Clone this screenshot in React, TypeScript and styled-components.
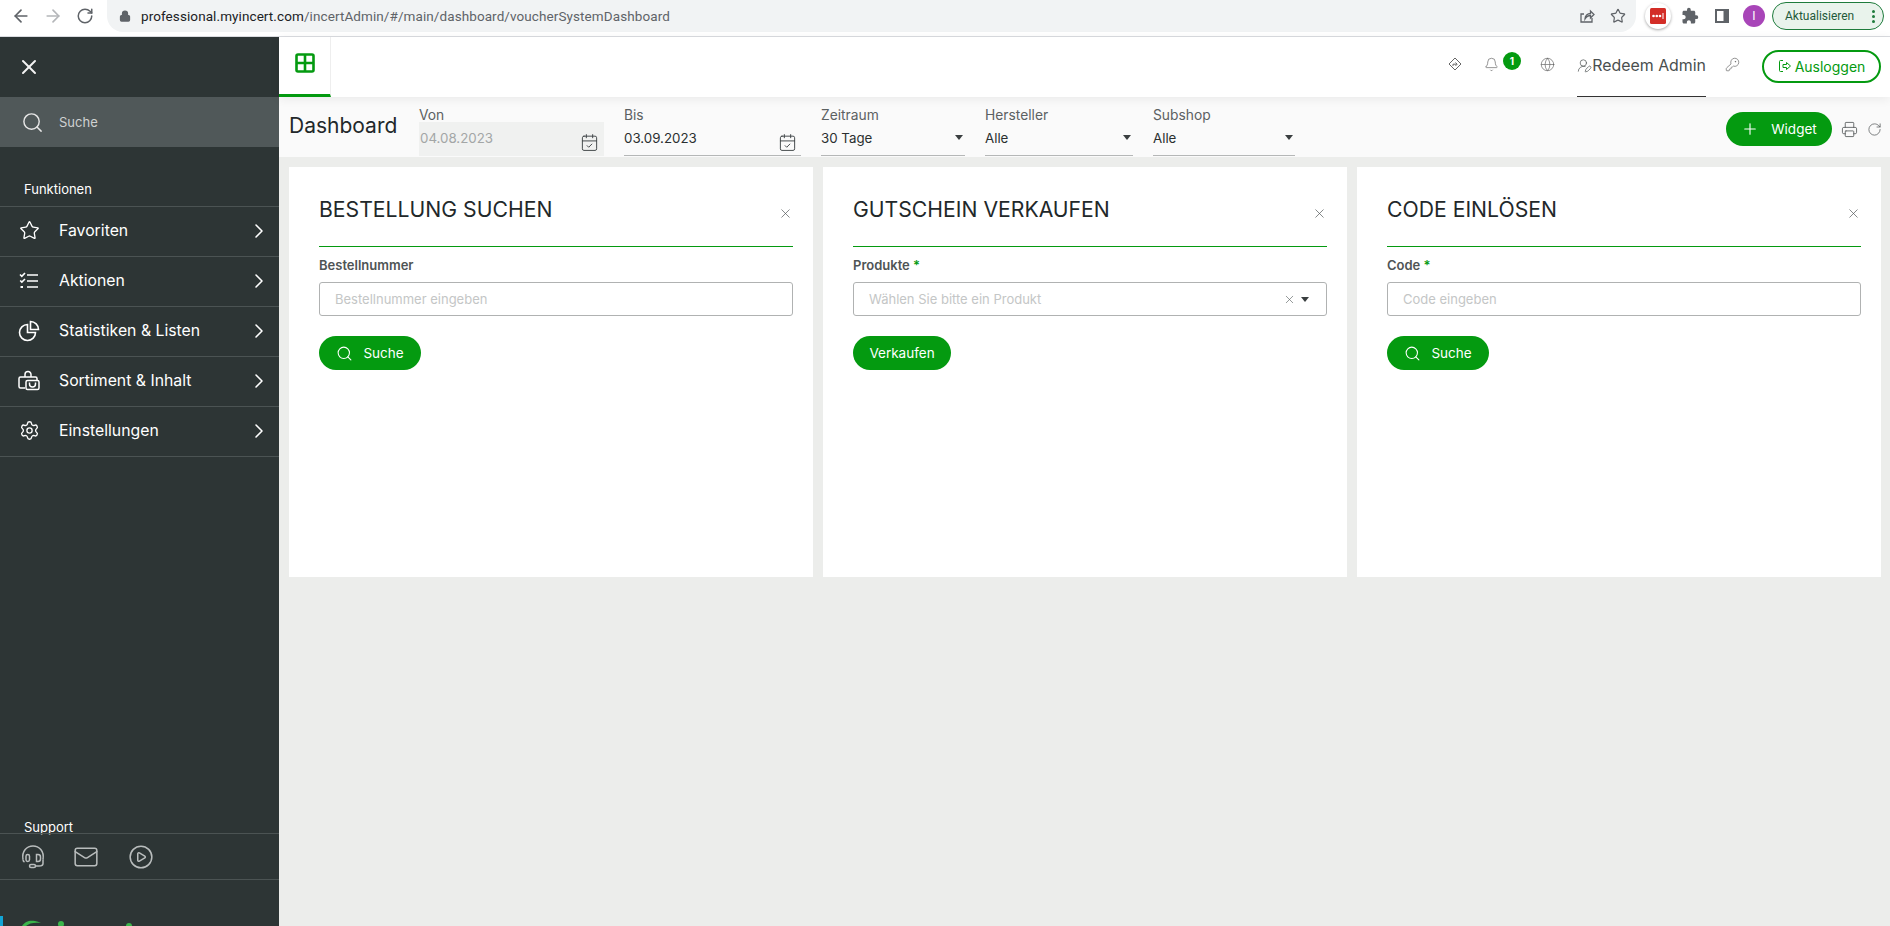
import React from 'react';
import styled, { createGlobalStyle } from 'styled-components';
import {
  ArrowLeft,
  ArrowRight,
  Bell,
  CalendarCheck,
  ChevronRight,
  CirclePlay,
  Globe,
  KeyRound,
  Lock,
  Mail,
  Plus,
  Printer,
  RotateCw,
  Search,
  Settings,
  Star,
  UserRoundPen,
  X,
} from 'lucide-react';
import { MdExtension } from 'react-icons/md';

const GREEN = '#049a10';
const FONT = 'Inter, "Liberation Sans", sans-serif';

const GlobalStyle = createGlobalStyle`
  html, body {
    margin: 0;
    height: 100%;
    overflow: hidden;
    background: #ecedeb;
    font-family: ${FONT};
  }
  * { box-sizing: border-box; }
`;

const Page = styled.div`
  display: flex;
  flex-direction: column;
  height: 100vh;
`;

/* browser chrome */
const ChromeBar = styled.div`
  display: flex;
  align-items: flex-start;
  height: 37px;
  padding-left: 5px;
  background: #fff;
  border-bottom: 1px solid #dadce0;
`;

const NavButton = styled.div<{ $dim?: boolean }>`
  display: flex;
  align-items: center;
  justify-content: center;
  width: 32px;
  height: 32px;
  color: ${p => (p.$dim ? '#b4b6b9' : '#5f6368')};
`;

const Omnibox = styled.div`
  flex: 1;
  display: flex;
  align-items: center;
  height: 32px;
  margin-left: 6px;
  padding: 0 10px 0 12px;
  background: #f1f3f4;
  border-radius: 0 0 16px 16px;
  color: #5f6368;
`;

const Url = styled.span`
  margin-left: 10px;
  font: 13.5px Roboto, sans-serif;
  letter-spacing: 0.09px;
  color: #5f6368;
  b {
    font-weight: 400;
    color: #202124;
  }
`;

const OmniIcons = styled.div`
  margin-left: auto;
  display: flex;
  align-items: center;
  gap: 15px;
`;

const ChromeTools = styled.div`
  display: flex;
  align-items: center;
  height: 32px;
  padding: 0 6px;
`;

const ToolSlot = styled.div`
  display: flex;
  align-items: center;
  justify-content: center;
  width: 32px;
  height: 32px;
  color: #5f6368;
`;

const PassBadge = styled.div`
  display: flex;
  align-items: center;
  justify-content: center;
  width: 26px;
  height: 26px;
  border-radius: 50%;
  background: #fff;
  box-shadow: 0 1px 3px rgba(0, 0, 0, 0.35);
`;

const Avatar = styled.div`
  display: flex;
  align-items: center;
  justify-content: center;
  width: 22px;
  height: 22px;
  border-radius: 50%;
  background: #a845b8;
  color: #fff;
  font: 12px Roboto, sans-serif;
`;

const UpdatePill = styled.div`
  display: flex;
  align-items: center;
  justify-content: space-between;
  width: 112px;
  height: 28px;
  margin-left: 2px;
  padding: 0 8px 0 12px;
  border: 1px solid #1e7b3c;
  border-radius: 14px;
  background: #e9f3ec;
  color: #1f5a3a;
  font: 12px Roboto, sans-serif;
`;

const Dots = styled.span`
  display: flex;
  flex-direction: column;
  gap: 2px;
  i {
    width: 3px;
    height: 3px;
    border-radius: 50%;
    background: #1e7b3c;
  }
`;

const Shell = styled.div`
  flex: 1;
  display: flex;
  min-height: 0;
`;

/* sidebar */
const Sidebar = styled.aside`
  display: flex;
  flex-direction: column;
  width: 279px;
  flex-shrink: 0;
  background: #2d3535;
  color: #fff;
`;

const CloseRow = styled.div`
  display: flex;
  align-items: center;
  height: 60px;
  padding-left: 17px;
  color: #f4f4f4;
`;

const SideSearch = styled.div`
  display: flex;
  align-items: center;
  height: 50px;
  padding-left: 21px;
  background: #505859;
  color: #e6e6e6;
  span {
    margin-left: 15px;
    font-size: 13px;
    color: #cfd1d1;
  }
`;

const SideHeading = styled.div<{ $top: number; $h: number }>`
  padding: ${p => p.$top}px 0 0 24px;
  height: ${p => p.$h}px;
  font-size: 13px;
  line-height: 16px;
  color: #fff;
`;

const Menu = styled.nav`
  border-top: 1px solid #4b5353;
`;

const MenuRow = styled.div`
  display: flex;
  align-items: center;
  height: 50px;
  padding: 0 8px 2px 17px;
  border-bottom: 1px solid #4b5353;
  font-size: 15.8px;
  color: #fff;
  span {
    margin-left: 18px;
    flex: 1;
  }
`;

const MenuIcon = styled.div`
  display: flex;
  align-items: center;
  justify-content: center;
  width: 24px;
`;

const SideSpacer = styled.div`
  flex: 1;
`;

const SupportRow = styled.div`
  display: flex;
  align-items: center;
  height: 47px;
  gap: 27px;
  padding-left: 20px;
  border-top: 1px solid #4b5353;
  border-bottom: 1px solid #4b5353;
  color: #b9bdbd;
  svg:last-child {
    margin-left: 2px;
  }
`;

const LogoStrip = styled.div`
  height: 46px;
  display: flex;
  align-items: flex-end;
  overflow: hidden;
`;

/* main column */
const Main = styled.main`
  flex: 1;
  display: flex;
  flex-direction: column;
  min-width: 0;
`;

const TopBar = styled.header`
  position: relative;
  z-index: 2;
  display: flex;
  align-items: center;
  height: 60px;
  padding-right: 9px;
  background: #fff;
  box-shadow: 0 2px 10px rgba(0, 0, 0, 0.07);
`;

const GridTab = styled.div`
  display: flex;
  align-items: center;
  justify-content: center;
  width: 52px;
  height: 60px;
  padding-bottom: 6px;
  border-right: 1px solid #eee;
  border-bottom: 3px solid ${GREEN};
`;

const TopTools = styled.div`
  margin-left: auto;
  display: flex;
  align-items: center;
  height: 60px;
  color: #666;
`;

const TopSlot = styled.div<{ $w: number; $mr?: number }>`
  position: relative;
  display: flex;
  align-items: center;
  width: ${p => p.$w}px;
  margin-right: ${p => p.$mr ?? 0}px;
  justify-content: center;
  padding-bottom: 6px;
`;

const CountBadge = styled.span`
  position: absolute;
  left: 30px;
  top: -5px;
  display: flex;
  align-items: center;
  justify-content: center;
  width: 18px;
  height: 18px;
  border-radius: 50%;
  background: ${GREEN};
  color: #fff;
  font-size: 10px;
  font-weight: 700;
`;

const UserTab = styled.div`
  display: flex;
  align-items: center;
  height: 60px;
  width: 129px;
  padding-bottom: 2px;
  border-bottom: 1px solid #333;
  color: #4a4f4f;
  font-size: 15.9px;
  white-space: nowrap;
`;

const Logout = styled.div`
  display: flex;
  align-items: center;
  justify-content: center;
  gap: 3px;
  width: 119px;
  height: 33px;
  margin-bottom: 2px;
  border: 2px solid ${GREEN};
  border-radius: 17px;
  color: ${GREEN};
  font-size: 14px;
`;

const FilterBar = styled.div`
  display: flex;
  height: 60px;
  padding: 10px 8px 0 10px;
  background: #fafafa;
`;

const PageTitle = styled.h1`
  width: 130px;
  margin: 7px 0 0;
  font-size: 21px;
  line-height: 24px;
  font-weight: 400;
  color: #22282a;
`;

const Filters = styled.div`
  display: flex;
  gap: 20px;
`;

const Field = styled.div<{ $w: number }>`
  width: ${p => p.$w}px;
`;

const FieldLabel = styled.div`
  height: 15px;
  padding-top: 1px;
  font-size: 13.8px;
  line-height: 15px;
  color: #5c6162;
`;

const FieldValue = styled.div<{ $disabled?: boolean }>`
  display: flex;
  align-items: center;
  justify-content: space-between;
  height: 34px;
  padding-bottom: 2px;
  font-size: 13.3px;
  padding-right: ${p => (p.$disabled ? '5px' : '0')};
  padding-left: ${p => (p.$disabled ? '1px' : '0')};
  color: ${p => (p.$disabled ? '#a3a6a6' : '#2a2f30')};
  background: ${p => (p.$disabled ? '#f0f1f0' : 'transparent')};
  border-bottom: 1px solid ${p => (p.$disabled ? '#f0f1f0' : '#b5b7b7')};
  svg.cal {
    margin-top: 9px;
    margin-right: ${p => (p.$disabled ? '0' : '4px')};
    color: #3f4547;
  }
`;

const Caret = styled.i<{ $mr?: number }>`
  width: 0;
  height: 0;
  margin-right: ${p => p.$mr ?? 2}px;
  border-left: 4.5px solid transparent;
  border-right: 4.5px solid transparent;
  border-top: 5px solid #3a3f40;
`;

const BarActions = styled.div`
  margin-left: auto;
  display: flex;
  align-items: center;
  height: 34px;
  margin-top: 5px;
  color: #555a5b;
`;

const PillButton = styled.button<{ $w: number; $gap?: number }>`
  display: flex;
  align-items: center;
  justify-content: center;
  gap: ${p => p.$gap ?? 10}px;
  width: ${p => p.$w}px;
  height: 34px;
  padding: 0;
  border: 0;
  border-radius: 17px;
  background: ${GREEN};
  color: #fff;
  font-family: ${FONT};
  font-size: 13.5px;
`;

const BarIcons = styled.div`
  display: flex;
  align-items: center;
  gap: 9px;
  margin-left: 9px;
`;

const CardGrid = styled.div`
  display: grid;
  grid-template-columns: repeat(3, 1fr);
  gap: 10px;
  padding: 10px 9px 0 10px;
`;

const Card = styled.section`
  height: 410px;
  padding: 0 20px 0 30px;
  background: #fff;
`;

const CardHead = styled.div`
  display: flex;
  justify-content: space-between;
  height: 80px;
  border-bottom: 1px solid ${GREEN};
  color: #4f5556;
  svg {
    margin-top: 39px;
  }
`;

const CardTitle = styled.h2`
  margin: 29px 0 0;
  font-size: 21.2px;
  line-height: 26px;
  font-weight: 400;
  color: #22282a;
`;

const InputLabel = styled.div`
  margin-top: 10px;
  font-size: 13px;
  line-height: 16px;
  font-weight: 600;
  color: #4f5455;
  em {
    font-style: normal;
    color: ${GREEN};
  }
`;

const InputBox = styled.div`
  display: flex;
  align-items: center;
  height: 34px;
  margin: 9px 0 20px;
  padding: 0 15px;
  border: 1px solid #b0b2b2;
  border-radius: 3px;
  font-size: 13px;
  color: #c4c6c6;
`;

const InputTools = styled.span`
  margin-left: auto;
  display: flex;
  align-items: center;
  gap: 5px;
  color: #5f6465;
`;

function GridGlyph() {
  return (
    <svg width="20" height="20" viewBox="0 0 20 20" fill="none" stroke={GREEN} strokeWidth="2.6">
      <rect x="1.5" y="1.5" width="17" height="17" rx="1.5" />
      <path d="M10 1.5v17M1.5 10h17" />
    </svg>
  );
}

function ChecklistGlyph() {
  return (
    <svg width="22" height="22" viewBox="0 0 22 22" fill="none" stroke="currentColor" strokeWidth="1.6">
      <path d="M2 4.5l1.8 1.8L7 3M2.2 10.5l1.6 1.6L7 9" />
      <path d="M9 5h11M9 11h11M9 17h11" />
      <path d="M2.5 17h2.5" strokeWidth="2" />
    </svg>
  );
}

function PieGlyph() {
  return (
    <svg width="22" height="22" viewBox="0 0 22 22" fill="none" stroke="currentColor" strokeWidth="1.6">
      <path d="M9.5 4.5a8 8 0 1 0 8 8h-8z" />
      <path d="M12.5 1.5a8 8 0 0 1 8 8h-8z" />
    </svg>
  );
}

function ShopGlyph() {
  return (
    <svg width="24" height="22" viewBox="0 0 24 22" fill="none" stroke="currentColor" strokeWidth="1.5">
      <path d="M8 7V4.5a3 3 0 0 1 6 0V7" />
      <path d="M8 18H3.5A1.5 1.5 0 0 1 2 16.5v-8A1.5 1.5 0 0 1 3.5 7h15A1.5 1.5 0 0 1 20 8.5V10" />
      <rect x="9" y="10.5" width="13" height="9" rx="1.5" />
      <path d="M12.5 12.5v1.5a3 3 0 0 0 6 0v-1.5" />
    </svg>
  );
}

function HeadsetGlyph() {
  return (
    <svg width="26" height="26" viewBox="0 0 26 26" fill="none" stroke="currentColor" strokeWidth="1.5">
      <path d="M3 15.5C1.5 7 7 2 13 2s11.5 5 10 13.5" />
      <path d="M3 15.5c0 1 .5 2 1.5 2.5" />
      <rect x="6" y="10.5" width="3.5" height="7" rx="1.7" />
      <path d="M16.5 10.5h1.5a2.500 2.500 0 0 1 2.5 2.5v2a2.500 2.500 0 0 1-2.5 2.5h-1.5z" />
      <path d="M23 15.5v4c0 2-1.5 2.5-4 2.5h-4" />
      <rect x="9.5" y="20.5" width="6" height="3" rx="1.5" />
    </svg>
  );
}

function DirectionGlyph() {
  return (
    <svg width="14" height="14" viewBox="0 0 14 14" fill="none" stroke="currentColor" strokeWidth="1">
      <path d="M7 1l6 6-6 6-6-6z" />
      <path d="M5 9V7.2h3.6M7.5 5.5l1.6 1.7-1.6 1.7" />
    </svg>
  );
}

function ShareGlyph() {
  return (
    <svg width="16" height="16" viewBox="0 0 16 16" fill="none" stroke="currentColor" strokeWidth="1.3">
      <path d="M13 10v4H2V6h3" />
      <path d="M6 11c0-3.5 2.5-5.5 5.5-5.5V3L15 6.500 11.5 10V7.5C9 7.5 7.3 8.8 6 11z" />
    </svg>
  );
}

function PanelGlyph() {
  return (
    <svg width="14" height="14" viewBox="0 0 14 14">
      <rect x="0" y="0" width="14" height="14" fill="#5f6368" />
      <rect x="2" y="2" width="6.5" height="10" fill="#fff" />
    </svg>
  );
}

function PassGlyph() {
  return (
    <svg width="16" height="16" viewBox="0 0 16 16">
      <rect width="16" height="16" rx="1.5" fill="#d32d27" />
      <circle cx="3.5" cy="8" r="1.3" fill="#fff" />
      <circle cx="6.8" cy="8" r="1.3" fill="#fff" />
      <circle cx="10" cy="8" r="1.3" fill="#fff" />
      <rect x="12.5" y="5" width="1" height="6" fill="#fff" />
    </svg>
  );
}

function LogoutGlyph() {
  return (
    <svg width="14" height="14" viewBox="0 0 14 14" fill="none" stroke="currentColor" strokeWidth="1">
      <path d="M5 1.5H2.5a1 1 0 0 0-1 1v9a1 1 0 0 0 1 1H5" />
      <path d="M5 5.5h3.5V3.5L12.5 7l-4 3.5v-2H5z" />
    </svg>
  );
}

function LogoPeek() {
  return (
    <svg width="160" height="10" viewBox="0 0 160 10">
      <rect x="0" y="0" width="3" height="10" fill="#12a5d6" />
      <path d="M22 10c3-5 8-6 13-5 2 .5 4 1 6 2-6-1-12 0-15 3z" fill="#3bb54a" />
      <circle cx="61" cy="8" r="3" fill="#3bb54a" />
      <circle cx="129" cy="10" r="3" fill="#3bb54a" />
    </svg>
  );
}

const MENU = [
  { label: 'Favoriten', icon: <Star size={21} strokeWidth={1.5} /> },
  { label: 'Aktionen', icon: <ChecklistGlyph /> },
  { label: 'Statistiken & Listen', icon: <PieGlyph /> },
  { label: 'Sortiment & Inhalt', icon: <ShopGlyph /> },
  { label: 'Einstellungen', icon: <Settings size={21} strokeWidth={1.5} /> },
];

const DateField: React.FC<{ label: string; value: string; w: number; disabled?: boolean }> = ({ label, value, w, disabled }) => (
  <Field $w={w}>
    <FieldLabel>{label}</FieldLabel>
    <FieldValue $disabled={disabled}>
      {value}
      <CalendarCheck className="cal" size={19} strokeWidth={1.2} />
    </FieldValue>
  </Field>
);

const SelectField: React.FC<{ label: string; value: string; w: number }> = ({ label, value, w }) => (
  <Field $w={w}>
    <FieldLabel>{label}</FieldLabel>
    <FieldValue>
      {value}
      <Caret />
    </FieldValue>
  </Field>
);

const WidgetCard: React.FC<{ title: string; children: React.ReactNode }> = ({ title, children }) => (
  <Card>
    <CardHead>
      <CardTitle>{title}</CardTitle>
      <X size={15} strokeWidth={1.1} />
    </CardHead>
    {children}
  </Card>
);

export default function App() {
  return (
    <Page>
      <GlobalStyle />
      <ChromeBar>
        <NavButton><ArrowLeft size={20} strokeWidth={2} /></NavButton>
        <NavButton $dim><ArrowRight size={20} strokeWidth={2} /></NavButton>
        <NavButton><RotateCw size={18} strokeWidth={2} /></NavButton>
        <Omnibox>
          <Lock size={12} strokeWidth={2.5} fill="#5f6368" />
          <Url><b>professional.myincert.com</b>/incertAdmin/#/main/dashboard/voucherSystemDashboard</Url>
          <OmniIcons>
            <ShareGlyph />
            <Star size={16} strokeWidth={1.8} />
          </OmniIcons>
        </Omnibox>
        <ChromeTools>
          <ToolSlot><PassBadge><PassGlyph /></PassBadge></ToolSlot>
          <ToolSlot><MdExtension size={18} /></ToolSlot>
          <ToolSlot><PanelGlyph /></ToolSlot>
          <ToolSlot><Avatar>I</Avatar></ToolSlot>
          <UpdatePill>
            Aktualisieren
            <Dots><i /><i /><i /></Dots>
          </UpdatePill>
        </ChromeTools>
      </ChromeBar>
      <Shell>
        <Sidebar>
          <CloseRow><X size={24} strokeWidth={2} /></CloseRow>
          <SideSearch>
            <Search size={23} strokeWidth={1.5} />
            <span>Suche</span>
          </SideSearch>
          <SideHeading $top={34} $h={59}>Funktionen</SideHeading>
          <Menu>
            {MENU.map(item => (
              <MenuRow key={item.label}>
                <MenuIcon>{item.icon}</MenuIcon>
                <span>{item.label}</span>
                <ChevronRight size={24} strokeWidth={1.6} />
              </MenuRow>
            ))}
          </Menu>
          <SideSpacer />
          <SideHeading $top={0} $h={14}>Support</SideHeading>
          <SupportRow>
            <HeadsetGlyph />
            <Mail size={26} strokeWidth={1.4} />
            <CirclePlay size={26} strokeWidth={1.4} />
          </SupportRow>
          <LogoStrip><LogoPeek /></LogoStrip>
        </Sidebar>
        <Main>
          <TopBar>
            <GridTab><GridGlyph /></GridTab>
            <TopTools>
              <TopSlot $w={36}><DirectionGlyph /></TopSlot>
              <TopSlot $w={36} $mr={20}>
                <Bell size={15} strokeWidth={1.1} />
                <CountBadge>1</CountBadge>
              </TopSlot>
              <TopSlot $w={36} $mr={12}><Globe size={15} strokeWidth={1.1} /></TopSlot>
              <UserTab>
                <UserRoundPen size={17} strokeWidth={1.1} />
                Redeem Admin
              </UserTab>
              <TopSlot $w={52} $mr={4}><KeyRound size={15} strokeWidth={1.1} /></TopSlot>
              <Logout>
                <LogoutGlyph />
                Ausloggen
              </Logout>
            </TopTools>
          </TopBar>
          <FilterBar>
            <PageTitle>Dashboard</PageTitle>
            <Filters>
              <DateField label="Von" value="04.08.2023" w={185} disabled />
              <DateField label="Bis" value="03.09.2023" w={177} />
              <SelectField label="Zeitraum" value="30 Tage" w={144} />
              <SelectField label="Hersteller" value="Alle" w={148} />
              <SelectField label="Subshop" value="Alle" w={142} />
            </Filters>
            <BarActions>
              <PillButton $w={106} $gap={12}>
                <Plus size={18} strokeWidth={1.5} />
                <span>Widget</span>
              </PillButton>
              <BarIcons>
                <Printer size={17} strokeWidth={1.2} />
                <RotateCw size={15} strokeWidth={1.2} />
              </BarIcons>
            </BarActions>
          </FilterBar>
          <CardGrid>
            <WidgetCard title="BESTELLUNG SUCHEN">
              <InputLabel>Bestellnummer</InputLabel>
              <InputBox>Bestellnummer eingeben</InputBox>
              <PillButton $w={102}>
                <Search size={17} strokeWidth={1.5} />
                <span>Suche</span>
              </PillButton>
            </WidgetCard>
            <WidgetCard title="GUTSCHEIN VERKAUFEN">
              <InputLabel>Produkte <em>*</em></InputLabel>
              <InputBox>
                Wählen Sie bitte ein Produkt
                <InputTools>
                  <X size={13} strokeWidth={1.2} />
                  <Caret $mr={2} />
                </InputTools>
              </InputBox>
              <PillButton $w={98}>Verkaufen</PillButton>
            </WidgetCard>
            <WidgetCard title="CODE EINLÖSEN">
              <InputLabel>Code <em>*</em></InputLabel>
              <InputBox>Code eingeben</InputBox>
              <PillButton $w={102}>
                <Search size={17} strokeWidth={1.5} />
                <span>Suche</span>
              </PillButton>
            </WidgetCard>
          </CardGrid>
        </Main>
      </Shell>
    </Page>
  );
}
